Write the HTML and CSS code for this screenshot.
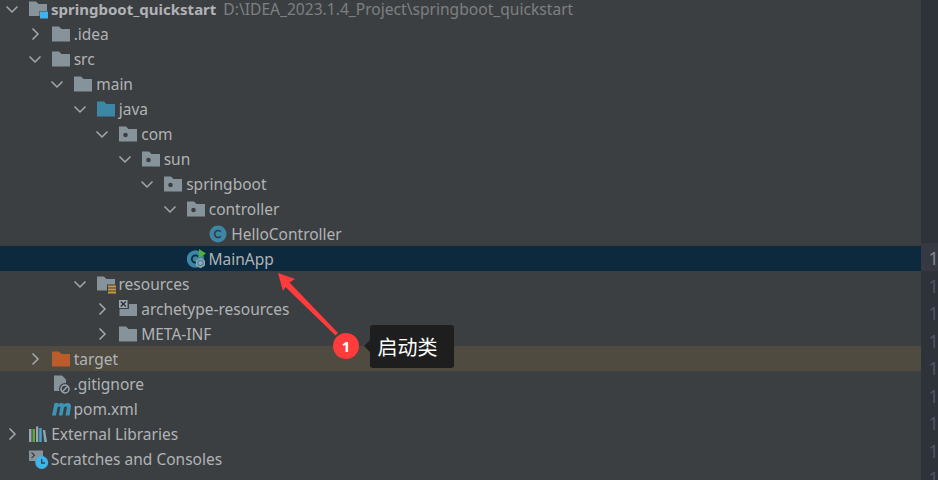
FILE: index.html
```html
<!DOCTYPE html>
<html lang="zh">
<head>
<meta charset="utf-8">
<title>Project tree</title>
<link rel="stylesheet" href="styles.css">
</head>
<body>
<svg class="defs" width="0" height="0" aria-hidden="true">
  <symbol id="chev-r" viewBox="0 0 16 16"><path d="M5.500 2.500 11 8l-5.500 5.500" fill="none" stroke="#a4a8ab" stroke-width="1.500"/></symbol>
  <symbol id="chev-d" viewBox="0 0 16 16"><path d="M2.500 5.500 8 11l5.500-5.500" fill="none" stroke="#a4a8ab" stroke-width="1.500"/></symbol>
  <symbol id="folder" viewBox="0 0 18 18"><path d="M0 1.500h7l2.500 2.500H18v12.500H0z" fill="#87939a"/></symbol>
  <symbol id="folder-blue" viewBox="0 0 18 18"><path d="M0 1.500h7l2.500 2.500H18v12.500H0z" fill="#3d87a6"/></symbol>
  <symbol id="folder-orange" viewBox="0 0 18 18"><path d="M0 1.500h7l2.500 2.500H18v12.500H0z" fill="#bb5c2c"/></symbol>
  <symbol id="folder-pkg" viewBox="0 0 18 18"><path d="M0 1.500h7l2.500 2.500H18v12.500H0z" fill="#87939a"/><circle cx="6.500" cy="10" r="2.300" fill="#3c3f41"/></symbol>
</svg>
<main class="window">
  <section class="tree">
    <div class="row l0"><svg class="chev"><use href="#chev-d"/></svg><svg class="icon wide" viewBox="0 0 20 20"><path d="M0 2.500h7l2.500 2.500H18v12H0z" fill="#87939a"/><rect x="10.500" y="12" width="9" height="8" fill="#3c3f41"/><rect x="11" y="12.500" width="8" height="7" fill="#3fb4e8"/></svg><span class="name bold">springboot_quickstart</span><span class="path">D:\IDEA_2023.1.4_Project\springboot_quickstart</span></div>
    <div class="row l1"><svg class="chev"><use href="#chev-r"/></svg><svg class="icon"><use href="#folder"/></svg><span class="name">.idea</span></div>
    <div class="row l1"><svg class="chev"><use href="#chev-d"/></svg><svg class="icon"><use href="#folder"/></svg><span class="name">src</span></div>
    <div class="row l2"><svg class="chev"><use href="#chev-d"/></svg><svg class="icon"><use href="#folder"/></svg><span class="name">main</span></div>
    <div class="row l3"><svg class="chev"><use href="#chev-d"/></svg><svg class="icon"><use href="#folder-blue"/></svg><span class="name">java</span></div>
    <div class="row l4"><svg class="chev"><use href="#chev-d"/></svg><svg class="icon"><use href="#folder-pkg"/></svg><span class="name">com</span></div>
    <div class="row l5"><svg class="chev"><use href="#chev-d"/></svg><svg class="icon"><use href="#folder-pkg"/></svg><span class="name">sun</span></div>
    <div class="row l6"><svg class="chev"><use href="#chev-d"/></svg><svg class="icon"><use href="#folder-pkg"/></svg><span class="name">springboot</span></div>
    <div class="row l7"><svg class="chev"><use href="#chev-d"/></svg><svg class="icon"><use href="#folder-pkg"/></svg><span class="name">controller</span></div>
    <div class="row l8"><span class="chev"></span><svg class="icon" viewBox="0 0 18 18"><circle cx="9" cy="9" r="8.500" fill="#3d87a6"/><path d="M11.800 6.800A3.500 3.500 0 1 0 11.800 11.200" fill="none" stroke="#2f3e46" stroke-width="1.700"/></svg><span class="name">HelloController</span></div>
    <div class="row l7 selected"><span class="chev"></span><svg class="icon wide" viewBox="0 0 20 20"><circle cx="8.500" cy="10" r="8.700" fill="#3d87a6"/><path d="M11 7.500A3.600 3.600 0 1 0 11 12.500" fill="none" stroke="#0d293e" stroke-width="1.800"/><path d="M12 0l7 4.500-7 4.500z" fill="#4fae3c"/><path d="M13.500 9.500l4 2.300v4.600l-4 2.300-4-2.300v-4.600z" fill="#9aa7b0" stroke="#9aa7b0" stroke-width="1"/><circle cx="13.500" cy="14" r="2.700" fill="none" stroke="#3d87a6" stroke-width="1.200"/></svg><span class="name">MainApp</span></div>
    <div class="row l3"><svg class="chev"><use href="#chev-d"/></svg><svg class="icon wide" viewBox="0 0 20 20"><path d="M0 2.500h7l2.500 2.500H18v11.500H0z" fill="#87939a"/><rect x="10" y="10.500" width="10" height="9.500" fill="#3c3f41"/><path d="M11 12.500h8M11 15.500h8M11 18.500h8" stroke="#c99a3a" stroke-width="2"/></svg><span class="name">resources</span></div>
    <div class="row l4"><svg class="chev"><use href="#chev-r"/></svg><svg class="icon" viewBox="0 0 18 18"><path d="M.5 4h17.500v12H.5z" fill="#87939a"/><rect x="-1" y="-1" width="11" height="10" fill="#3c3f41"/><rect y="0" width="8.500" height="8" fill="#9aa7b0"/><path d="M1.800 1.500l5 5M6.800 1.500l-5 5" stroke="#2b2d30" stroke-width="1.300"/></svg><span class="name">archetype-resources</span></div>
    <div class="row l4"><svg class="chev"><use href="#chev-r"/></svg><svg class="icon"><use href="#folder"/></svg><span class="name">META-INF</span></div>
    <div class="row l1 excluded"><svg class="chev"><use href="#chev-r"/></svg><svg class="icon"><use href="#folder-orange"/></svg><span class="name">target</span></div>
    <div class="row l1"><span class="chev"></span><svg class="icon wide" viewBox="0 0 20 20"><path d="M2 1.500h8l4 4V17H2z" fill="#87939a"/><circle cx="13" cy="15" r="6" fill="#3c3f41"/><circle cx="13" cy="15" r="4" fill="none" stroke="#9aa7b0" stroke-width="1.500"/><path d="M10.300 17.700l5.400-5.400" stroke="#9aa7b0" stroke-width="1.500"/></svg><span class="name">.gitignore</span></div>
    <div class="row l1"><span class="chev"></span><svg class="icon wide" viewBox="0 0 20 20"><path d="M0 16.500 2.500 4H6.500L6.200 5.500C7.500 3.800 11 3 12 5.500 13.500 3.800 19 2.800 19 7.500L17.500 16.500H13.500L15 8.500C15.200 7 12.800 7 12 8.500L10.500 16.500H6.800L8.300 8.500C8.500 7 6 7 5.500 8.500L4 16.500z" fill="#3c93b5"/></svg><span class="name">pom.xml</span></div>
    <div class="row l0"><svg class="chev"><use href="#chev-r"/></svg><svg class="icon" viewBox="0 0 18 18"><path d="M0 4h2.500v13H0z" fill="#9aa7b0"/><path d="M3.500 4H6v13H3.500z" fill="#5fa83c"/><path d="M7 1.500h2.300V17H7z" fill="#9aa7b0"/><path d="M10.200 3h2.500v14h-2.500z" fill="#3fa5d5"/><path d="M13.800 5h2.300L18 17h-2.700z" fill="#8fa3b0"/></svg><span class="name">External Libraries</span></div>
    <div class="row l0"><span class="chev"></span><svg class="icon wide" viewBox="0 0 20 20"><path d="M0 1.500h14v10.500H0z" fill="#87939a"/><path d="M2.500 3.500l3 2.800-3 2.800" fill="none" stroke="#3c3f41" stroke-width="1.200"/><circle cx="12.700" cy="13.500" r="6.500" fill="#3fb4e8"/><path d="M12.700 10V14H16" fill="none" stroke="#3c3f41" stroke-width="1.300"/></svg><span class="name">Scratches and Consoles</span></div>
  </section>
  <aside class="gutter">
    <span class="num current">1</span><span class="num">1</span><span class="num">1</span><span class="num">1</span><span class="num">1</span><span class="num">1</span><span class="num">1</span><span class="num">1</span><span class="num">1</span>
  </aside>
  <svg class="callout-arrow" viewBox="0 0 938 480" aria-hidden="true"><path d="M278 273 295 279 289.500 282.500 338 333 335.500 335.500 285.500 287 283 291z" fill="#ff3b3b"/></svg>
  <div class="badge">1</div>
  <div class="tip">启动类</div>
</main>
</body>
</html>
```
FILE: styles.css
```css
* { box-sizing: border-box; }
html, body { margin: 0; padding: 0; }
body { background: #3c3f41; font-family: "Noto Sans", "Noto Sans CJK SC", sans-serif; }
.defs { position: absolute; }
.window { position: relative; width: 938px; height: 480px; display: flex; overflow: hidden; background: #3c3f41; }
.tree { flex: 1; min-width: 0; margin-top: -4px; }
.row { height: 25px; display: flex; align-items: center; white-space: nowrap; font-size: 15.500px; line-height: 17px; color: #b0b3b6; }
.l0 { padding-left: 4px; }
.l1 { padding-left: 26.500px; }
.l2 { padding-left: 49px; }
.l3 { padding-left: 71.500px; }
.l4 { padding-left: 94px; }
.l5 { padding-left: 116.500px; }
.l6 { padding-left: 139px; }
.l7 { padding-left: 161.500px; }
.l8 { padding-left: 184px; }
.chev { width: 16px; height: 16px; flex: none; margin-right: 9px; }
.icon { width: 18px; height: 18px; flex: none; margin-right: 4.200px; }
.icon.wide { width: 20px; height: 20px; margin-right: 2px; }
.name { margin-top: 2px; }
.name.bold { font-weight: 700; font-size: 15px; }
.path { margin: 2px 0 0 7px; color: #7d8083; font-size: 15.600px; }
.selected { background: #0d293e; }
.excluded { background: #4f4b41; }
.gutter { flex: none; width: 17px; background: #2e3239; display: flex; flex-direction: column; padding: 243px 0 0 0; overflow: hidden; }
.num { flex: none; height: 27.500px; padding-left: 7.500px; font-size: 18px; line-height: 30px; color: #4c5563; }
.current { color: #7c8590; background: #363942; }
.callout-arrow { position: absolute; left: 0; top: 0; width: 938px; height: 480px; }
.badge { position: absolute; left: 333px; top: 333px; width: 26px; height: 26px; border-radius: 50%; background: #ff3b3b; color: #fff; font-size: 15px; font-weight: 700; line-height: 26px; text-align: center; }
.tip { position: absolute; left: 370px; top: 325px; width: 84px; height: 43px; padding-left: 7.500px; border-radius: 3px; background: #1e1e1e; color: #fff; font: 20px/43px "Noto Sans CJK SC", sans-serif; }
.tip::before { content: ""; position: absolute; left: -6px; top: 15px; border: 6px solid transparent; border-left: 0; border-right-color: #1e1e1e; }
```
